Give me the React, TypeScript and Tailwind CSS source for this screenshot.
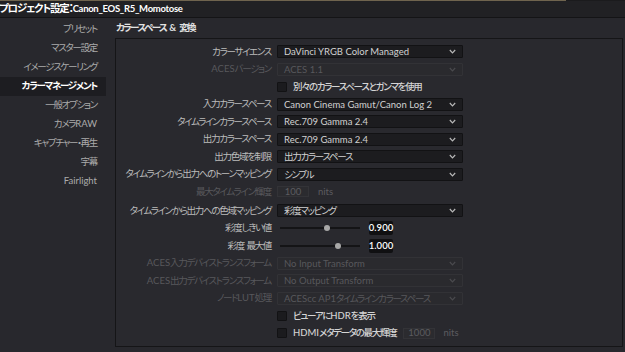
import React from "react";

type Row =
  | { kind: "select"; label: string; value: string; disabled?: boolean }
  | { kind: "check"; label: string; extra?: string }
  | { kind: "number"; label: string; value: string }
  | { kind: "slider"; label: string; pos: number; value: string };

const rows: Row[] = [
  { kind: "select", label: "カラーサイエンス", value: "DaVinci YRGB Color Managed" },
  { kind: "select", label: "ACESバージョン", value: "ACES 1.1", disabled: true },
  { kind: "check", label: "別々のカラースペースとガンマを使用" },
  { kind: "select", label: "入力カラースペース", value: "Canon Cinema Gamut/Canon Log 2" },
  { kind: "select", label: "タイムラインカラースペース", value: "Rec.709 Gamma 2.4" },
  { kind: "select", label: "出力カラースペース", value: "Rec.709 Gamma 2.4" },
  { kind: "select", label: "出力色域を制限", value: "出力カラースペース" },
  { kind: "select", label: "タイムラインから出力へのトーンマッピング", value: "シンプル" },
  { kind: "number", label: "最大タイムライン輝度", value: "100" },
  { kind: "select", label: "タイムラインから出力への色域マッピング", value: "彩度マッピング" },
  { kind: "slider", label: "彩度しきい値", pos: 47, value: "0.900" },
  { kind: "slider", label: "彩度 最大値", pos: 58, value: "1.000" },
  { kind: "select", label: "ACES入力デバイストランスフォーム", value: "No Input Transform", disabled: true },
  { kind: "select", label: "ACES出力デバイストランスフォーム", value: "No Output Transform", disabled: true },
  { kind: "select", label: "ノードLUT処理", value: "ACEScc AP1タイムラインカラースペース", disabled: true },
  { kind: "check", label: "ビューアにHDRを表示" },
  { kind: "check", label: "HDMIメタデータの最大輝度", extra: "1000" },
];

const menu = [
  "プリセット",
  "マスター設定",
  "イメージスケーリング",
  "カラーマネージメント",
  "一般オプション",
  "カメラRAW",
  "キャプチャー・再生",
  "字幕",
  "Fairlight",
];

// Japanese runs are set tighter than the latin ones, like Hiragino with palt
function T({ s, big }: { s: string; big?: boolean }) {
  const parts = s.split(/([\u3000-\u9fff\uff00-\uffef]+)/);
  return (
    <>
      {parts.map((p, i) =>
        i % 2 === 1 ? (
          <span key={i} className={big ? "text-[10.5px] tracking-[-1.2px]" : "text-[9.5px] tracking-[-1.3px]"}>
            {p}
          </span>
        ) : (
          <span key={i}>{p}</span>
        )
      )}
    </>
  );
}

function Chevron({ dim }: { dim?: boolean }) {
  return (
    <svg width="7" height="5" viewBox="0 0 7 5" className={dim ? "text-[#4a4a4e]" : "text-[#b8b8b8]"}>
      <path d="M0.8 1 L3.5 3.8 L6.2 1" fill="none" stroke="currentColor" strokeWidth="1.2" />
    </svg>
  );
}

function Control({ row }: { row: Row }) {
  if (row.kind === "select") {
    return (
      <div
        className={
          "w-[186px] h-[13px] flex items-center justify-between pl-[6px] pr-[6px] rounded-[1px] border " +
          (row.disabled
            ? "bg-[#2a2a2e] border-[#323236] text-[#58585c]"
            : "bg-[#1c1c1f] border-[#121214] text-[#d2d2d2]")
        }
      >
        <span className="leading-none whitespace-nowrap">
          <T s={row.value} />
        </span>
        <Chevron dim={row.disabled} />
      </div>
    );
  }
  if (row.kind === "check") {
    return (
      <div className="flex items-center whitespace-nowrap">
        <div className="w-[10px] h-[10px] bg-[#1b1b1e] border border-[#121214] rounded-[1px]" />
        <span className="ml-[6px] text-[#d4d4d4] font-medium">
          <T s={row.label} />
        </span>
        {row.extra && (
          <>
            <div className="ml-[7px] w-[32px] h-[11px] flex items-center justify-center bg-[#2b2b2f] border border-[#333337] text-[#5c5c60]">
              {row.extra}
            </div>
            <span className="ml-[8px] text-[#5c5c60]">nits</span>
          </>
        )}
      </div>
    );
  }
  if (row.kind === "number") {
    return (
      <div className="flex items-center">
        <div className="w-[32px] h-[11px] flex items-center justify-center bg-[#2b2b2f] border border-[#333337] text-[#5c5c60]">
          {row.value}
        </div>
        <span className="ml-[9px] text-[#5c5c60]">nits</span>
      </div>
    );
  }
  return (
    <div className="flex items-center">
      <div className="relative ml-[3px] w-[80px] h-[2px] bg-[#141416]">
        <div
          className="absolute top-[-2px] w-[6px] h-[6px] -ml-[3px] rounded-full bg-[#a8a8a8]"
          style={{ left: `${row.pos}px` }}
        />
      </div>
      <div className="ml-[9px] w-[24px] h-[14px] flex items-center justify-center rounded-[2px] bg-[#101012] text-white font-semibold">
        {row.value}
      </div>
    </div>
  );
}

export default function App() {
  return (
    <div className="w-[625px] h-[352px] overflow-hidden flex flex-col bg-[#28282d] text-[9.5px] font-['Lato','Noto_Sans_CJK_JP',sans-serif] [font-feature-settings:'palt']">
      <div className="h-px flex shrink-0">
        <div className="w-[566px] bg-[#6f644e]" />
        <div className="flex-1 bg-[#1b1b1d]" />
      </div>
      <div className="h-[17px] shrink-0 flex items-center bg-[#212124] border-b border-[#141416]">
        <span className="-ml-[1px] text-[9.5px] tracking-[-0.3px] font-bold text-white whitespace-nowrap">
          <T s="プロジェクト設定：" big />
          Canon_EOS_R5_Momotose
        </span>
      </div>

      <div className="flex flex-1 min-h-0">
        <div className="w-[106px] shrink-0 pt-[2px] flex flex-col">
          {menu.map((m) => (
            <div
              key={m}
              className={
                "h-[19px] flex items-center justify-end pr-[9px] whitespace-nowrap " +
                (m === "カラーマネージメント" ? "bg-[#1d1d21] text-white font-bold" : "text-[#ababab]")
              }
            >
              <T s={m} />
            </div>
          ))}
        </div>

        <div className="flex-1 flex flex-col pl-[9px] pr-[2px] pb-[5px]">
          <div className="h-[20px] shrink-0 flex items-center gap-[3px] pl-[1px] text-[#e2e2e2] font-bold whitespace-nowrap text-[9.5px] tracking-[-1.6px]">
            <span>カラースペース</span>
            <span className="tracking-normal">&amp;</span>
            <span>変換</span>
          </div>
          <div className="flex-1 border border-[#151517] bg-[#29292e] pt-[4px]">
            {rows.map((r, i) => (
              <div
                key={i}
                className={"h-[17.5px] flex items-center " + (r.kind === "number" ? "mb-[1.5px]" : "")}
              >
                <div
                  className={
                    "w-[155px] shrink-0 text-right whitespace-nowrap " +
                    ((r.kind === "select" && r.disabled) || r.kind === "number" ? "text-[#58585c]" : "text-[#bcbcbc]")
                  }
                >
                  {r.kind === "check" ? "" : <T s={r.label} />}
                </div>
                <div className="ml-[6px]">
                  <Control row={r} />
                </div>
              </div>
            ))}
          </div>
        </div>
      </div>
    </div>
  );
}
